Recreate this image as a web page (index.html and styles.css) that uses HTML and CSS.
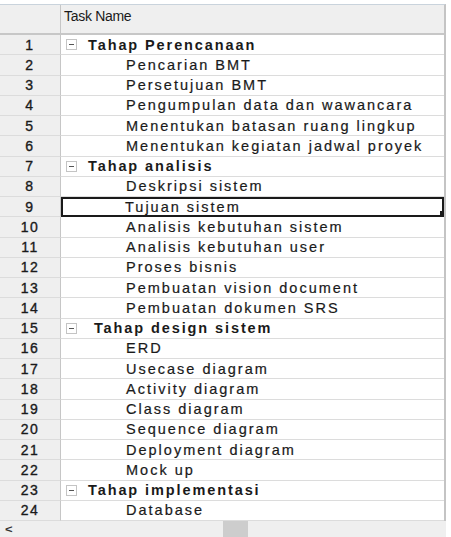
FILE: index.html
```html
<!DOCTYPE html>
<html>
<head>
<meta charset="utf-8">
<link rel="stylesheet" href="styles.css">
</head>
<body>
<div class="sheet">
  <div class="grid">
    <div class="hd num"></div>
    <div class="hd name">Task Name</div>

    <div class="num">1</div><div class="name summary"><span class="tog"></span>Tahap Perencanaan</div>
    <div class="num">2</div><div class="name task">Pencarian BMT</div>
    <div class="num">3</div><div class="name task">Persetujuan BMT</div>
    <div class="num">4</div><div class="name task">Pengumpulan data dan wawancara</div>
    <div class="num">5</div><div class="name task">Menentukan batasan ruang lingkup</div>
    <div class="num">6</div><div class="name task">Menentukan kegiatan jadwal proyek</div>
    <div class="num">7</div><div class="name summary"><span class="tog"></span>Tahap analisis</div>
    <div class="num">8</div><div class="name task">Deskripsi sistem</div>
    <div class="num">9</div><div class="name task selected">Tujuan sistem<span class="handle"></span></div>
    <div class="num">10</div><div class="name task">Analisis kebutuhan sistem</div>
    <div class="num">11</div><div class="name task">Analisis kebutuhan user</div>
    <div class="num">12</div><div class="name task">Proses bisnis</div>
    <div class="num">13</div><div class="name task">Pembuatan vision document</div>
    <div class="num">14</div><div class="name task">Pembuatan dokumen SRS</div>
    <div class="num">15</div><div class="name summary"><span class="tog"></span>&nbsp;Tahap design sistem</div>
    <div class="num">16</div><div class="name task">ERD</div>
    <div class="num">17</div><div class="name task">Usecase diagram</div>
    <div class="num">18</div><div class="name task">Activity diagram</div>
    <div class="num">19</div><div class="name task">Class diagram</div>
    <div class="num">20</div><div class="name task">Sequence diagram</div>
    <div class="num">21</div><div class="name task">Deployment diagram</div>
    <div class="num">22</div><div class="name task">Mock up</div>
    <div class="num">23</div><div class="name summary"><span class="tog"></span>Tahap implementasi</div>
    <div class="num">24</div><div class="name task">Database</div>
  </div>
  <div class="hscroll">
    <span class="arrow">&lt;</span>
    <span class="thumb"></span>
  </div>
</div>
</body>
</html>
```

FILE: styles.css
```css
html, body {
  margin: 0;
  padding: 0;
  background: #ffffff;
}

.sheet {
  width: 446px;
  height: 537px;
  padding-top: 4px;
  box-sizing: border-box;
  display: flex;
  flex-direction: column;
  font-family: "Liberation Sans", Arial, sans-serif;
  font-size: 14.5px;
  color: #1a1a1a;
}

.grid {
  display: grid;
  grid-template-columns: 61px 383px;
  grid-template-rows: 30px repeat(24, 20.25px);
  border-top: 1px solid #c9d3dc;
  border-right: 2px solid #c4c4c4;
  width: 446px;
  box-sizing: border-box;
}

.grid > div {
  border-bottom: 1px solid #dcdcdc;
  box-sizing: border-box;
  white-space: nowrap;
  overflow: hidden;
  display: flex;
  align-items: center;
  letter-spacing: 2px;
  -webkit-text-stroke: 0.2px #1a1a1a;
}

.num {
  background: #efefef;
  border-right: 1px solid #c6c6c6;
  justify-content: center;
  font-size: 14px;
  letter-spacing: 1.5px !important;
  -webkit-text-stroke: 0.35px #1a1a1a !important;
}

.hd {
  background: #efefef;
  border-bottom: 2px solid #c7c7c7 !important;
  align-items: flex-start !important;
}

.hd.name {
  padding: 3px 0 0 3px;
  letter-spacing: -0.3px !important;
  font-size: 14px;
  -webkit-text-stroke: 0 !important;
}

.name {
  position: relative;
}

.task {
  padding-left: 65px;
}

.summary {
  padding-left: 5px;
  font-weight: bold;
  letter-spacing: 1.9px !important;
  -webkit-text-stroke: 0 !important;
}

.tog {
  width: 9px;
  height: 9px;
  border: 1px solid #c4c4c4;
  margin-right: 11px;
  position: relative;
  flex: none;
}

.tog::after {
  content: "";
  position: absolute;
  left: 2px;
  top: 4px;
  width: 5px;
  height: 1px;
  background: #555;
}

.selected {
  outline: 2px solid #1a1a1a;
  outline-offset: -2px;
  padding-left: 64px;
}

.handle {
  position: absolute;
  right: 0;
  bottom: 0;
  width: 4px;
  height: 5px;
  background: #1a1a1a;
}

.hscroll {
  flex: 1;
  background: #efefef;
  position: relative;
  display: flex;
  align-items: center;
  font-size: 13px;
  color: #333;
}

.arrow {
  margin-left: 5px;
  font-weight: bold;
  transform: scaleY(0.8);
}

.thumb {
  position: absolute;
  left: 223px;
  top: 0;
  bottom: 0;
  width: 25px;
  background: #cdcdcd;
}
```
